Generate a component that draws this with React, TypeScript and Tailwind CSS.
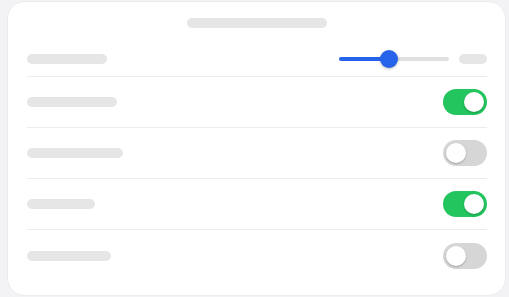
import React from 'react';

const Bar = ({ w }: { w: string }) => (
  <div className={`h-[10px] rounded-full bg-[#e6e6e6] ${w}`} />
);

const Toggle = ({ on }: { on: boolean }) => (
  <div
    className={`flex h-[26px] w-[44px] items-center rounded-full p-[3px] ${
      on ? 'justify-end bg-[#22c55e]' : 'justify-start bg-[#d6d6d6]'
    }`}
  >
    <div className="h-[20px] w-[20px] rounded-full bg-white shadow-[0_1px_2px_rgba(0,0,0,0.25)]" />
  </div>
);

export default function App() {
  const rows = [
    { w: 'w-[90px]', on: true },
    { w: 'w-[96px]', on: false },
    { w: 'w-[68px]', on: true },
    { w: 'w-[84px]', on: false },
  ];
  const value = 45;

  return (
    <div className="h-[297px] w-[509px] bg-[#f3f3f5] pl-[7px] pr-[3px] pt-[1px] pb-[1px] font-['Inter',sans-serif]">
      <div className="h-[295px] rounded-[18px] border border-[#ececec] bg-white pl-[19px] pr-[18px] pt-[16px]">
        {/* header */}
        <div className="flex justify-center">
          <Bar w="w-[140px]" />
        </div>

        {/* slider row */}
        <div className="mt-[22px] flex h-[18px] items-center justify-between">
          <Bar w="w-[80px]" />
          <div className="flex items-center gap-[10px]">
            <div className="relative h-[4px] w-[110px] rounded-full bg-[#e0e0e0]">
              <div
                className="absolute left-0 top-0 h-[4px] rounded-full bg-[#2563eb]"
                style={{ width: `${value}%` }}
              />
              <div
                className="absolute top-1/2 h-[18px] w-[18px] -translate-x-1/2 -translate-y-1/2 rounded-full bg-[#2563eb] shadow-[0_1px_3px_rgba(0,0,0,0.25)]"
                style={{ left: `${value}%` }}
              />
            </div>
            <Bar w="w-[28px]" />
          </div>
        </div>
        <div className="mt-[8px] border-b border-[#ececec]" />

        {/* toggle rows */}
        {rows.map((r, i) => (
          <div
            key={i}
            className={`flex h-[51px] items-center justify-between ${
              i < rows.length - 1 ? 'border-b border-[#ececec]' : ''
            }`}
          >
            <Bar w={r.w} />
            <Toggle on={r.on} />
          </div>
        ))}
      </div>
    </div>
  );
}
